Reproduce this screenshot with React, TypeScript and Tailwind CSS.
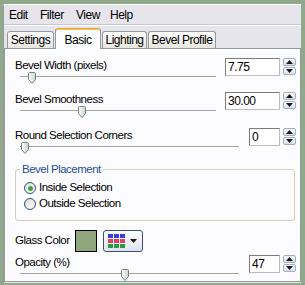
import React from "react";

const Thumb = () => (
  <svg width="8" height="12" viewBox="0 0 8 12">
    <defs>
      <linearGradient id="tg" x1="0" x2="1">
        <stop offset="0" stopColor="#ffffff" />
        <stop offset="1" stopColor="#c6d3c6" />
      </linearGradient>
    </defs>
    <path
      d="M0.5 1.5 Q0.5 0.5 1.5 0.5 H6.5 Q7.5 0.5 7.5 1.5 V7.5 L4 11.5 L0.5 7.5 Z"
      fill="url(#tg)"
      stroke="#6f8579"
    />
  </svg>
);

const Slider = ({ width, pos }: { width: number; pos: number }) => (
  <div className="relative ml-[5px] h-[12px]" style={{ width }}>
    <div className="mt-[4px] h-[2px] border-t border-[#a3a39d] border-b border-b-white" />
    <div className="absolute top-0" style={{ left: pos }}>
      <Thumb />
    </div>
  </div>
);

const Arrow = ({ up }: { up?: boolean }) => (
  <svg width="7" height="4" viewBox="0 0 7 4">
    <path d={up ? "M0 4 L3.5 0 L7 4 Z" : "M0 0 L3.5 4 L7 0 Z"} fill="#1a1a1a" />
  </svg>
);

const Spin = () => (
  <div className="ml-[3px] flex flex-col gap-[1px]">
    <div className="flex h-[8px] w-[13px] items-center justify-center rounded-[2px] border border-[#9fb0c6] bg-gradient-to-b from-white to-[#d9dee9]">
      <Arrow up />
    </div>
    <div className="flex h-[8px] w-[13px] items-center justify-center rounded-[2px] border border-[#9fb0c6] bg-gradient-to-b from-white to-[#d9dee9]">
      <Arrow />
    </div>
  </div>
);

const NumberBox = ({ value, width }: { value: string; width: number }) => (
  <div className="flex items-start">
    <div
      className="h-[18px] border border-[#7b7b7b] border-r-[#bdbdbd] border-b-[#bdbdbd] bg-white pl-[2px] text-[12px] leading-[16px]"
      style={{ width }}
    >
      {value}
    </div>
    <Spin />
  </div>
);

const SliderRow = ({
  label,
  value,
  boxWidth,
  trackWidth,
  pos,
  className,
}: {
  label: string;
  value: string;
  boxWidth: number;
  trackWidth: number;
  pos: number;
  className?: string;
}) => (
  <div className={`flex items-start ${className ?? ""}`}>
    <div className="flex flex-1 flex-col">
      <div className="h-[14px] leading-[14px]">{label}</div>
      <Slider width={trackWidth} pos={pos} />
    </div>
    <NumberBox value={value} width={boxWidth} />
  </div>
);

const Tab = ({ label, width, active }: { label: string; width: number; active?: boolean }) =>
  active ? (
    <div
      className="relative z-10 -mb-[1px] flex h-[21px] items-start justify-center rounded-t-[3px] border border-[#919b9c] border-b-0 border-t-[#e8a23c] bg-[#fcfcfe] pt-[2px] shadow-[inset_0_1px_0_#ffc84a]"
      style={{ width }}
    >
      {label}
    </div>
  ) : (
    <div
      className="flex h-[17px] items-center justify-center rounded-t-[3px] border border-[#919b9c] border-b-0 bg-gradient-to-b from-white to-[#e6e5de]"
      style={{ width }}
    >
      {label}
    </div>
  );

const Radio = ({ checked, label }: { checked?: boolean; label: string }) => (
  <div className="flex h-[16px] items-center">
    <div className="ml-[8px] flex h-[12px] w-[12px] items-center justify-center rounded-full border border-[#2b4f7c] bg-gradient-to-br from-[#dcdcd6] to-white">
      {checked && <div className="h-[5px] w-[5px] rounded-full bg-[#3fa23c]" />}
    </div>
    <span className="ml-[3px]">{label}</span>
  </div>
);

const Palette = () => (
  <svg width="17" height="14" viewBox="0 0 17 14">
    {[0, 1, 2].map((r) =>
      [0, 1, 2].map((c) => (
        <rect
          key={`${r}-${c}`}
          x={c * 6}
          y={r * 5}
          width="5"
          height="4"
          fill={r === 0 ? "#3d3dd0" : r === 1 ? "#e0405e" : "#2f9a3c"}
        />
      ))
    )}
  </svg>
);

export default function App() {
  return (
    <div className="h-[285px] w-[305px] bg-[#91a98b] pl-[3px] pr-[4px] pt-[4px] pb-[2px] font-['Liberation_Sans',Arial,sans-serif] text-[11.5px] tracking-[-0.5px] text-black">
      <div className="flex h-full flex-col border-l border-t border-[#9a9a9a] border-t-white bg-[#e6e5ec]">
        <div className="flex h-[19px] items-center pl-[5px] text-[12px]">
          <span className="w-[31px]">Edit</span>
          <span className="w-[36px]">Filter</span>
          <span className="w-[34px]">View</span>
          <span>Help</span>
        </div>
        <div className="h-[2px] border-t border-[#c9c8d0] bg-white" />
        <div className="flex h-[22px] items-end gap-[1px] pl-[3px] text-[12px]">
          <Tab label="Settings" width={47} />
          <Tab label="Basic" width={46} active />
          <Tab label="Lighting" width={45} />
          <Tab label="Bevel Profile" width={68} />
        </div>
        <div className="mb-[1px] flex flex-1 flex-col border border-[#919b9c] bg-[#fcfcfe] pl-[10px] pr-[4px] pt-[9px]">
          <SliderRow label="Bevel Width (pixels)" value="7.75" boxWidth={55} trackWidth={196} pos={8} />
          <SliderRow label="Bevel Smoothness" value="30.00" boxWidth={55} trackWidth={196} pos={58} className="mt-[8px]" />
          <SliderRow label="Round Selection Corners" value="0" boxWidth={31} trackWidth={219} pos={1} className="mt-[10px]" />
          <fieldset className="mr-[1px] mt-[8px] rounded-[3px] border border-[#d0d0bf] pb-[8px] pt-[4px]">
            <legend className="ml-[4px] px-[2px] leading-[14px] text-[#1f4d96]">Bevel Placement</legend>
            <Radio checked label="Inside Selection" />
            <Radio label="Outside Selection" />
          </fieldset>
          <div className="mt-[9px] flex items-center">
            <span className="w-[60px]">Glass Color</span>
            <div className="h-[22px] w-[22px] border border-black bg-[#8fa67f]" />
            <div className="ml-[6px] flex h-[22px] w-[40px] items-center gap-[5px] rounded-[3px] border border-[#34507a] bg-gradient-to-b from-white to-[#dfe3ee] pl-[4px]">
              <Palette />
              <Arrow />
            </div>
          </div>
          <SliderRow label="Opacity (%)" value="47" boxWidth={31} trackWidth={219} pos={101} className="mt-[3px]" />
        </div>
      </div>
    </div>
  );
}
